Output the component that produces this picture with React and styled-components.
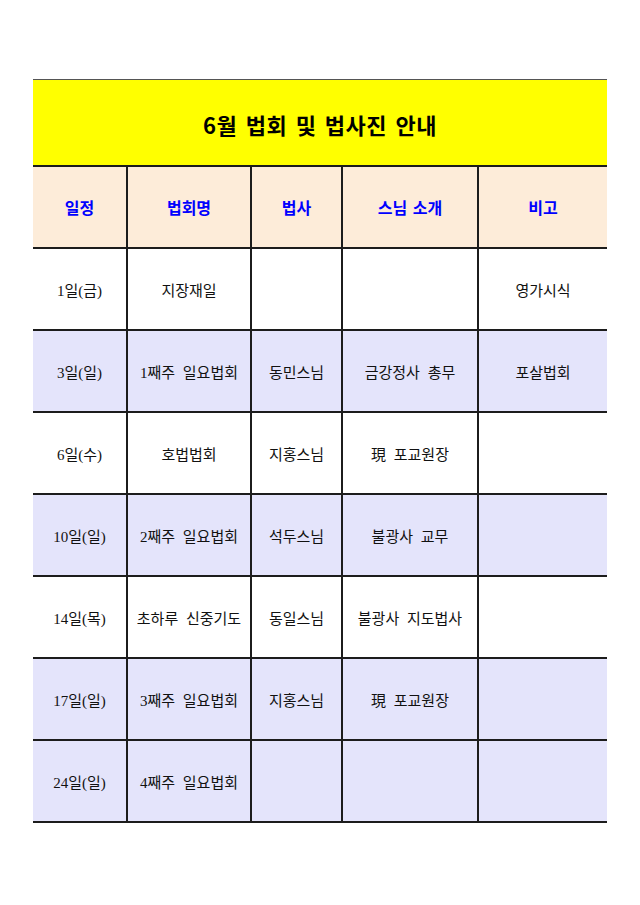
import React from 'react';
import styled, { createGlobalStyle } from 'styled-components';

const GlobalStyle = createGlobalStyle`
  html, body {
    margin: 0;
    padding: 0;
    background: #fff;
  }
  body {
    font-family: "Liberation Serif", "Noto Sans CJK KR", serif;
  }
`;

const Page = styled.div`
  width: 640px;
  height: 905px;
  padding: 79px 0 0 33px;
  box-sizing: border-box;
`;

const Table = styled.div`
  width: 574px;
  display: flex;
  flex-direction: column;
`;

const TitleBar = styled.div`
  height: 88px;
  box-sizing: border-box;
  background: #ffff00;
  border-top: 1px solid #555;
  border-bottom: 2px solid #1c1c1c;
  display: flex;
  align-items: center;
  justify-content: center;
  font-family: "Noto Sans CJK KR", sans-serif;
  font-weight: 700;
  font-size: 22px;
  letter-spacing: 0.5px;
  word-spacing: 3px;
  color: #000;
  padding-top: 2px;
`;

const Row = styled.div`
  display: grid;
  grid-template-columns: 93px 124px 91px 136px 130px;
  height: 82px;
  box-sizing: border-box;
  border-bottom: 2px solid #1c1c1c;
  background: ${(p) => p.$bg};
`;

const Cell = styled.div`
  display: flex;
  align-items: center;
  justify-content: center;
  border-left: ${(p) => (p.$first ? 'none' : '2px solid #1c1c1c')};
  font-size: 15px;
  color: #111;
  white-space: nowrap;
  word-spacing: 4px;
`;

const HeadCell = styled(Cell)`
  font-family: "Noto Sans CJK KR", sans-serif;
  font-weight: 700;
  font-size: 16px;
  color: #0000ff;
  word-spacing: 2px;
`;

const headers = ['일정', '법회명', '법사', '스님 소개', '비고'];

const rows = [
  ['1일(금)', '지장재일', '', '', '영가시식'],
  ['3일(일)', '1째주 일요법회', '동민스님', '금강정사 총무', '포살법회'],
  ['6일(수)', '호법법회', '지홍스님', '現 포교원장', ''],
  ['10일(일)', '2째주 일요법회', '석두스님', '불광사 교무', ''],
  ['14일(목)', '초하루 신중기도', '동일스님', '불광사 지도법사', ''],
  ['17일(일)', '3째주 일요법회', '지홍스님', '現 포교원장', ''],
  ['24일(일)', '4째주 일요법회', '', '', ''],
];

const App = () => (
  <Page>
    <GlobalStyle />
    <Table>
      <TitleBar>6월 법회 및 법사진 안내</TitleBar>
      <Row $bg="#fdecd9">
        {headers.map((h, i) => (
          <HeadCell key={h} $first={i === 0}>{h}</HeadCell>
        ))}
      </Row>
      {rows.map((r, ri) => (
        <Row key={ri} $bg={ri % 2 === 1 || ri === 6 ? '#e4e4fb' : '#ffffff'}>
          {r.map((c, ci) => (
            <Cell key={ci} $first={ci === 0}>{c}</Cell>
          ))}
        </Row>
      ))}
    </Table>
  </Page>
);

export default App;
